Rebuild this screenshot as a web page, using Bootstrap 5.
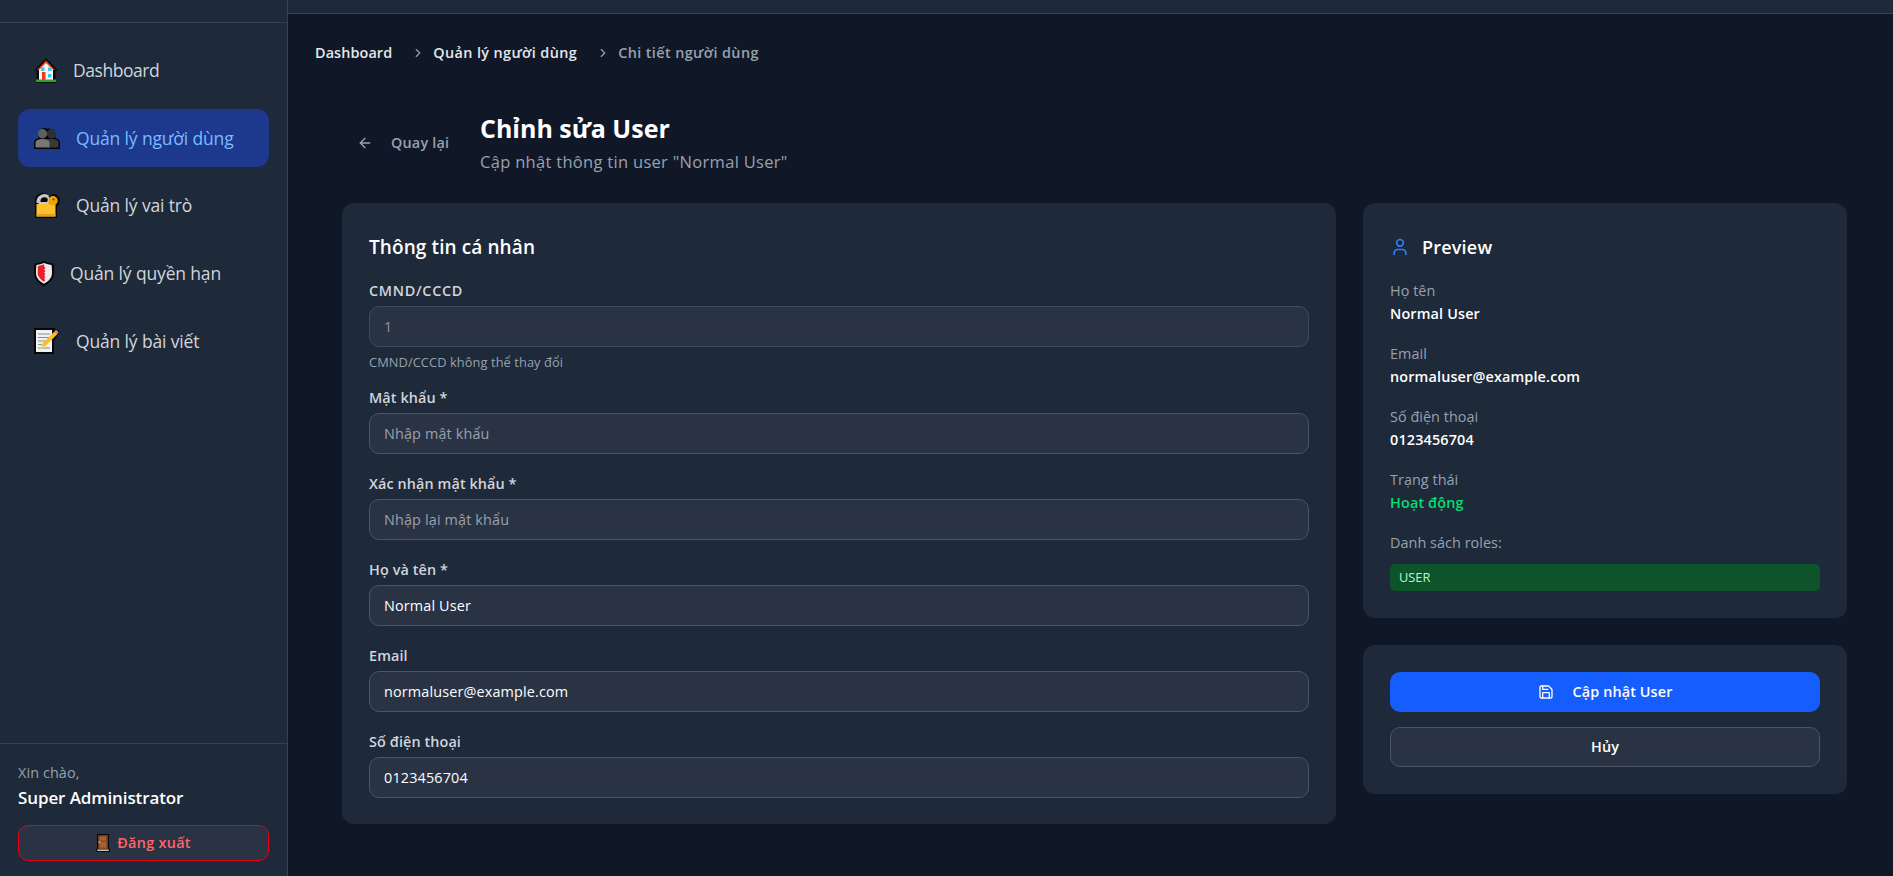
<!DOCTYPE html>
<html lang="vi">
<head>
<meta charset="utf-8">
<title>Chỉnh sửa User</title>
<link href="https://cdn.jsdelivr.net/npm/bootstrap@5.3.0/dist/css/bootstrap.min.css" rel="stylesheet">
<style>
html,body{height:100%;overflow:hidden}
body{background:#101828;font-family:"Open Sans","Noto Sans","Liberation Sans",sans-serif;color:#fff;font-size:14px}
.shell{height:876px}
.side{width:288px;flex:none;background:#1e2939;border-right:1px solid #364153}
.side-top{height:23px;border-bottom:1px solid #364153}
.side-nav{padding:18px 18px 0;gap:9.7px}
.side-link{height:58px;padding:0 16px;border-radius:12px;font-size:17.5px;color:#d1d5dc;text-decoration:none;letter-spacing:-.15px}
.side-link.on{background:#1c398e;color:#7cb9ff}
.side-link.dash{letter-spacing:-.45px;gap:15px}
.g16{gap:16px}
.g17{gap:17px}
.side-foot{height:133px;border-top:1px solid #364153;padding:19px 18px 0}
.hello{font-size:14.4px;color:#99a1af;line-height:20px;letter-spacing:.1px}
.who{font-size:17px;font-weight:600;line-height:24px;margin-top:3px;letter-spacing:-.1px}
.logout{height:36px;margin-top:15px;background:#2a3344;border:1px solid #e7000b;border-radius:10px;color:#ff6467;font-size:14.4px;font-weight:600;letter-spacing:.3px;gap:7px;padding:0}
.logout:hover{background:#2a3344;color:#ff6467;border-color:#e7000b}
.main-area{min-width:0}
.main-top{height:14px;background:#1e2939;border-bottom:1px solid #364153}
.crumbs{padding:29px 0 0 27px;font-size:14.4px;font-weight:600;line-height:20px;letter-spacing:.4px;color:#e5e7eb}
.crumbs .first{letter-spacing:.1px}
.crumbs .sep{width:41px;padding-left:19px}
.crumbs .now{color:#99a1af}
.head{padding:49px 0 0 69px}
.back{font-size:14.4px;font-weight:600;color:#99a1af;letter-spacing:.2px;gap:18px;width:123px}
.head h1{font-size:25px;font-weight:700;line-height:32px;margin:0}
.head p{font-size:16.5px;color:#99a1af;line-height:24px;margin:6px 0 0;letter-spacing:.3px}
.grid-wrap{padding:29px 46px 0 54px;gap:27px;align-items:flex-start}
.panel{background:#1e2939;border:0;border-radius:12px;padding:30px 27px 27px;color:#fff}
.panel-l{flex:1;min-width:0;height:621px}
.panel-r{width:484px;flex:none}
.panel-b{padding-top:27px}
.col-r{gap:27px}
.panel h2{font-size:19px;font-weight:600;line-height:28px;margin:0;letter-spacing:.1px}
.panel h2.pv-h{font-size:18px;letter-spacing:.2px;gap:12px}
.lbl{display:block;font-size:14.4px;font-weight:600;color:#d1d5dc;line-height:20px;margin:0 0 5px;letter-spacing:.1px}
.lbl.caps{letter-spacing:.7px}
.fld{height:41px;background:#2a3344;border:1px solid #4a5565;border-radius:10px;color:#fff;font-size:14.4px;padding:0 14px;letter-spacing:.15px}
.fld:focus{background:#2a3344;color:#fff}
.fld::placeholder{color:#99a1af;opacity:1}
.fld:disabled{background:#2a3344;color:#8a93a3;border-color:#3f4a5c}
.hint{font-size:12.800px;color:#99a1af;line-height:16px;margin-top:7px;letter-spacing:.1px}
.grp{margin-top:20px}
.grp.one{margin-top:20px}
.grp.aft{margin-top:18px}
.pv-k{font-size:14.4px;color:#99a1af;line-height:20px;letter-spacing:.05px}
.pv-v{font-size:14.4px;font-weight:600;line-height:20px;margin-top:3px;letter-spacing:.15px}
.pv{margin-top:20.100px}
.pv.one{margin-top:19.500px}
.tag{display:block;background:#0d542b;color:#b9f8cf;border-radius:5px;height:27px;line-height:27px;font-size:12.800px;padding:0 9px;font-weight:400;margin-top:11px;text-align:left;letter-spacing:0}
.act{height:40px;border-radius:10px;font-size:14.4px;font-weight:600;letter-spacing:.12px;padding:0;gap:19px;color:#fff}
.act-p{background:#155dfc;border:0}
.act-p:hover{background:#155dfc;color:#fff}
.act-s{background:#2a3344;border:1px solid #4a5565;margin-top:15px}
.act-s:hover{background:#2a3344;color:#fff;border-color:#4a5565}
.emo{flex:none;display:block}
.stat{color:#05df72}
</style>
</head>
<body>
<div class="shell d-flex">
  <aside class="side d-flex flex-column">
    <div class="side-top"></div>
    <nav class="side-nav d-flex flex-column flex-grow-1">
      <a class="side-link dash d-flex align-items-center" href="#">
        <svg class="emo" width="24" height="25" viewBox="0 0 24 25"><path d="M12 0 0 12.500h2.500V25h19V12.500H24z" fill="#0a0a0a"/><path d="M12 2.500 3 12h18z" fill="#e8401f"/><path d="M12 5 5 12v10.500h14V12z" fill="#f5f5f0"/><path d="M8 14h3.500v8.500H8z" fill="#ea3d1e"/><path d="M7 9.500h3.500V13H7zM14 9.500h3.500V13H14zM14 16h3.500v3.500H14z" fill="#35c8f5"/><path d="M2 21.500h20V24H2z" fill="#27a82e"/></svg>
        <span>Dashboard</span></a>
      <a class="side-link on g16 d-flex align-items-center" href="#">
        <svg class="emo" width="26" height="22" viewBox="0 0 26 22"><path d="M0 22v-6c0-3 2.500-4.500 5-5.300a6.500 6.500 0 0 1 8.500-9 6.500 6.500 0 0 1 7.500 9c2.700.8 5 2.300 5 5.300v6z" fill="#070707"/><circle cx="17.500" cy="6.800" r="4.700" fill="#2f2f2f"/><path d="M13 20.500v-5c0-1.500-.3-2.300-1-3 2-.7 9-1 11 .5.900.7 1.500 1.500 1.500 2.500v5z" fill="#393939"/><circle cx="8.500" cy="6.800" r="4.700" fill="#5f5f5f"/><path d="M1.500 20.500v-4.800c0-2.500 3-3.700 7-3.700s7 1.200 7 3.700v4.800z" fill="#777"/></svg>
        <span>Quản lý người dùng</span></a>
      <a class="side-link g16 d-flex align-items-center" href="#">
        <svg class="emo" width="26" height="26" viewBox="0 0 26 26"><path d="M1 26V10a8 8 0 0 1 14.500-5.500A5.800 5.800 0 0 1 25 11a5.500 5.500 0 0 1-2 3.500V26z" fill="#070707"/><path d="M5.500 11V9a5 5 0 0 1 9.500-2l-.5 1.500c-.4 1-.5 1.500-.4 2.500z M3.500 11V9a7 7 0 0 1 11-4.500" fill="none" stroke="#c8c8c8" stroke-width="2"/><path d="M2.500 12h19v12.500h-19z" fill="#fdc02f"/><path d="M2.500 22h19v2.500h-19z" fill="#e5a21a"/><circle cx="19" cy="8.800" r="4.700" fill="#f2a500"/><circle cx="19.500" cy="7.500" r="1.100" fill="#6b4b00"/></svg>
        <span>Quản lý vai trò</span></a>
      <a class="side-link g16 d-flex align-items-center" href="#">
        <svg class="emo" width="20" height="25" viewBox="0 0 20 25"><path d="M10 0C6.500 1.500 3 2 .5 2.500 0 3 0 9 0 12c0 6 4.500 10.500 10 13 5.500-2.500 10-7 10-13 0-3 0-9-.5-9.500C17 2 13.500 1.500 10 0z" fill="#070707"/><path d="M10 2C7.500 3 5 3.500 2.500 4 2 7 2 10 2 12c0 4.800 3.500 8.500 8 10.800 4.500-2.300 8-6 8-10.800 0-2 0-5-.5-8C15 3.500 12.500 3 10 2z" fill="#ececec"/><path d="M10 3.200C8 4 6 4.500 4 5c-.3 2.500-.3 5-.3 7 0 3.500 2.500 6.500 6.300 8.800l1.200-1.800-1-1.500 1.200-1.500-1.200-1.500 1.200-1.500-1.200-1.500 1.200-1.500-1.200-1.500 1.200-1.500-1.200-1.500z" fill="#e8202b"/></svg>
        <span>Quản lý quyền hạn</span></a>
      <a class="side-link g17 d-flex align-items-center" href="#">
        <svg class="emo" width="25" height="26" viewBox="0 0 25 26"><path d="M0 0h21v3l4-1v3l-5 8v13H0z" fill="#070707"/><path d="M2 2h16v22H2z" fill="#f1f1f1"/><path d="M4 6h12M4 9.500h11M4 13h8M4 16.500h5M4 20h12" stroke="#8d8d8d" stroke-width="1.200"/><path d="M6 21.500 8 16 20.500 3.500l3 2.500L10.500 19z" fill="#f6c02c"/><path d="M6 21.500 8 16l2.500 3z" fill="#e9d6a8"/><path d="M20.500 3.500 22 2l2.500 2-1 2z" fill="#e58a8a"/></svg>
        <span>Quản lý bài viết</span></a>
    </nav>
    <div class="side-foot">
      <div class="hello">Xin chào,</div>
      <div class="who">Super Administrator</div>
      <button class="logout btn w-100 d-flex align-items-center justify-content-center" type="button">
        <svg class="emo" width="14" height="18" viewBox="0 0 14 18"><path d="M1 0h12v15h1v3H0v-3h1z" fill="#070707"/><path d="M2.200 1.200h9.600V15H2.200z" fill="#8a4b25"/><path d="M4 3h6v3.500H4zM4 8h6v5.500H4z" fill="#a4623a"/><path d="M1.200 15.500h11.600V17H1.200z" fill="#c8c8c8"/><circle cx="3.500" cy="8" r=".9" fill="#e6b455"/></svg>
        <span>Đăng xuất</span></button>
    </div>
  </aside>
  <main class="main-area flex-grow-1 d-flex flex-column">
    <div class="main-top"></div>
    <div class="crumbs d-flex align-items-center">
      <span class="first">Dashboard</span>
      <span class="sep d-flex"><svg width="14" height="14" viewBox="0 0 24 24" fill="none" stroke="#99a1af" stroke-width="2" stroke-linecap="round" stroke-linejoin="round"><path d="m9 18 6-6-6-6"/></svg></span>
      <span>Quản lý người dùng</span>
      <span class="sep d-flex"><svg width="14" height="14" viewBox="0 0 24 24" fill="none" stroke="#99a1af" stroke-width="2" stroke-linecap="round" stroke-linejoin="round"><path d="m9 18 6-6-6-6"/></svg></span>
      <span class="now">Chi tiết người dùng</span>
    </div>
    <header class="head d-flex">
      <div class="back d-flex align-items-center">
        <svg width="16" height="16" viewBox="0 0 24 24" fill="none" stroke="#99a1af" stroke-width="2" stroke-linecap="round" stroke-linejoin="round"><path d="m12 19-7-7 7-7"/><path d="M19 12H5"/></svg>
        <span>Quay lại</span>
      </div>
      <div>
        <h1>Chỉnh sửa User</h1>
        <p>Cập nhật thông tin user "Normal User"</p>
      </div>
    </header>
    <div class="grid-wrap d-flex">
      <section class="panel panel-l card">
        <h2>Thông tin cá nhân</h2>
        <div class="grp one"><label class="lbl caps">CMND/CCCD</label><input class="form-control fld" value="1" disabled><div class="hint">CMND/CCCD không thể thay đổi</div></div>
        <div class="grp aft"><label class="lbl">Mật khẩu *</label><input class="form-control fld" placeholder="Nhập mật khẩu"></div>
        <div class="grp"><label class="lbl">Xác nhận mật khẩu *</label><input class="form-control fld" placeholder="Nhập lại mật khẩu"></div>
        <div class="grp"><label class="lbl">Họ và tên *</label><input class="form-control fld" value="Normal User"></div>
        <div class="grp"><label class="lbl">Email</label><input class="form-control fld" value="normaluser@example.com"></div>
        <div class="grp"><label class="lbl">Số điện thoại</label><input class="form-control fld" value="0123456704"></div>
      </section>
      <div class="col-r d-flex flex-column">
        <section class="panel panel-r card">
          <h2 class="pv-h d-flex align-items-center"><svg width="20" height="20" viewBox="0 0 24 24" fill="none" stroke="#2b7fff" stroke-width="2" stroke-linecap="round" stroke-linejoin="round"><path d="M19 21v-2a4 4 0 0 0-4-4H9a4 4 0 0 0-4 4v2"/><circle cx="12" cy="7" r="4"/></svg><span>Preview</span></h2>
          <div class="pv one"><div class="pv-k">Họ tên</div><div class="pv-v">Normal User</div></div>
          <div class="pv"><div class="pv-k">Email</div><div class="pv-v">normaluser@example.com</div></div>
          <div class="pv"><div class="pv-k">Số điện thoại</div><div class="pv-v">0123456704</div></div>
          <div class="pv"><div class="pv-k">Trạng thái</div><div class="pv-v stat">Hoạt động</div></div>
          <div class="pv"><div class="pv-k">Danh sách roles:</div><span class="tag">USER</span></div>
        </section>
        <section class="panel panel-r panel-b card">
          <button class="act act-p btn w-100 d-flex align-items-center justify-content-center" type="button"><svg width="16" height="16" viewBox="0 0 24 24" fill="none" stroke="#fff" stroke-width="2" stroke-linecap="round" stroke-linejoin="round"><path d="M15.200 3a2 2 0 0 1 1.400.6l3.800 3.800a2 2 0 0 1 .6 1.400V19a2 2 0 0 1-2 2H5a2 2 0 0 1-2-2V5a2 2 0 0 1 2-2z"/><path d="M17 21v-7a1 1 0 0 0-1-1H8a1 1 0 0 0-1 1v7"/><path d="M7 3v4a1 1 0 0 0 1 1h7"/></svg><span>Cập nhật User</span></button>
          <button class="act act-s btn w-100" type="button">Hủy</button>
        </section>
      </div>
    </div>
  </main>
</div>
</body>
</html>
